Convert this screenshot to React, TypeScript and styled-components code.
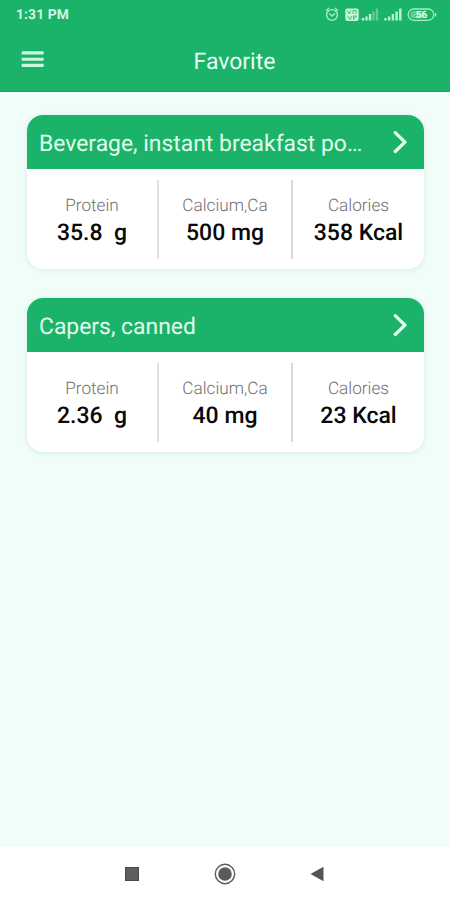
import React from "react";
import styled, { createGlobalStyle } from "styled-components";

const GREEN = "#1ab369";

const Global = createGlobalStyle`
  * { box-sizing: border-box; }
  html, body { margin: 0; padding: 0; }
  body {
    font-family: Roboto, "Liberation Sans", sans-serif;
    text-rendering: geometricPrecision;
    background: #f0fdf8;
  }
  svg { display: block; }
`;

const Screen = styled.div`
  width: 450px;
  height: 900px;
  display: flex;
  flex-direction: column;
  background: #f0fdf8;
  overflow: hidden;
`;

const Header = styled.header`
  height: 92px;
  flex: none;
  background: ${GREEN};
  border-bottom: 1px solid #18a661;
  color: #e6fff2;
`;

const StatusBar = styled.div`
  height: 30px;
  display: flex;
  justify-content: space-between;
  padding: 0 13px 0 16px;
`;

const Clock = styled.span`
  font-size: 13.8px;
  font-weight: 700;
  line-height: 31px;
  letter-spacing: 0.15px;
  color: #d5f8e4;
`;

const TitleBar = styled.div`
  height: 61px;
  display: grid;
  grid-template-columns: 86px 1fr 67px;
  align-items: start;
`;

const MenuButton = styled.button`
  border: 0;
  padding: 20px 0 0 21px;
  background: none;
  text-align: left;
`;

const Title = styled.h1`
  margin: 0;
  font-size: 23px;
  font-weight: 400;
  line-height: 60px;
  padding-top: 2px;
  text-align: center;
`;

const List = styled.main`
  flex: 1;
  display: flex;
  flex-direction: column;
  gap: 29px;
  padding: 23px 26px 0 27px;
`;

const Card = styled.article`
  height: 154px;
  border-radius: 16px;
  overflow: hidden;
  background: #fff;
  box-shadow: 0 1px 5px rgba(60, 150, 120, 0.16);
`;

const CardHeader = styled.div`
  height: 54px;
  display: flex;
  align-items: center;
  justify-content: space-between;
  padding: 0 14px 0 12px;
  background: ${GREEN};
  color: #e0fcec;
`;

const FoodName = styled.h2`
  margin: 0;
  width: 330px;
  font-size: 22.9px;
  font-weight: 400;
  line-height: 54px;
  padding-top: 4px;
  white-space: nowrap;
`;

const Nutrients = styled.div`
  height: 100px;
  display: grid;
  grid-template-columns: 132px 134px 1fr;
  padding-top: 11px;
`;

const Nutrient = styled.div<{ $divider?: string }>`
  height: 79px;
  border-right: ${(p) => (p.$divider ? `2px solid ${p.$divider}` : "0")};
  display: flex;
  flex-direction: column;
  align-items: center;
  padding-top: 15px;
  white-space: pre;
`;

const Label = styled.span`
  font-size: 17.2px;
  font-weight: 300;
  line-height: 22px;
  color: #707070;
`;

const Value = styled.strong`
  font-size: 23px;
  font-weight: 500;
  line-height: 30px;
  color: #080808;
  margin-top: 1px;
`;

const NavBar = styled.nav`
  height: 53px;
  flex: none;
  background: #fff;
`;

const NavIcons = styled.div`
  display: flex;
  align-items: center;
  justify-content: space-between;
  height: 53px;
  padding: 0 126px 0 125px;
`;

const foods = [
  { name: "Beverage, instant breakfast po…", values: ["35.8  g", "500 mg", "358 Kcal"] },
  { name: "Capers, canned", values: ["2.36  g", "40 mg", "23 Kcal"] },
];

const StatusIcons = () => (
  <svg width="114" height="30" viewBox="323 0 114 30" fill="none" stroke="#a8edca">
    <circle cx="332" cy="15" r="5.4" strokeWidth="1.4" />
    <path d="M326 11l3-3M338 11l-3-3M329.5 13.5l2.5 2.5 3-2.5" strokeWidth="1.4" />
    <rect x="345.3" y="8.5" width="13.4" height="12.5" rx="2" fill="#c8f5dc" stroke="none" />
    <path d="M347.5 10.5l1.7 3.5 1.7-3.5M353 14v-3.5h3V14M348 16l2 3.5 2-3.5M353.5 19.5V16h3l-3 3.5" stroke={GREEN} strokeWidth="0.8" />
    <g strokeWidth="2.4">
      <path d="M363 20.5v-2.5M366.5 20.5v-4M370 20.5v-6.5" stroke="#b9f2d4" />
      <path d="M373.5 20.5v-9M377 20.5v-12" stroke="#62cc97" />
      <path d="M385.5 20.5v-2.5M389.2 20.5v-4M392.9 20.5v-6.5M396.6 20.5v-9M400.3 20.5v-12" stroke="#b9f2d4" />
    </g>
    <rect x="408.2" y="9" width="25.6" height="11.3" rx="5.6" strokeWidth="1.3" />
    <rect x="410.3" y="11" width="15" height="7.3" rx="3.5" fill="#5fcf97" stroke="none" />
    <path d="M435.6 13v3.5" strokeWidth="1.3" />
    <text x="421.5" y="18.3" fill="#e2ffef" stroke="none" fontSize="10" fontWeight="700" textAnchor="middle">56</text>
  </svg>
);

const MenuIcon = () => (
  <svg width="24" height="18" viewBox="0 0 24 18" fill="#cbf7df">
    <rect x="0.7" y="1.3" width="22" height="3.2" rx="0.6" />
    <rect x="0.7" y="7.7" width="22" height="3" rx="0.6" />
    <rect x="0.7" y="13.7" width="22" height="3.2" rx="0.6" />
  </svg>
);

const Chevron = () => (
  <svg width="18" height="26" viewBox="0 0 18 26" fill="none" stroke="#e8fff3" strokeWidth="3.2" strokeLinecap="round" strokeLinejoin="round">
    <path d="M3.2 3.7l9.8 9.5-9.8 9.3" />
  </svg>
);

export default function App() {
  return (
    <Screen>
      <Global />
      <Header>
        <StatusBar>
          <Clock>1:31 PM</Clock>
          <StatusIcons />
        </StatusBar>
        <TitleBar>
          <MenuButton aria-label="Menu"><MenuIcon /></MenuButton>
          <Title>Favorite</Title>
        </TitleBar>
      </Header>
      <List>
        {foods.map((food) => (
          <Card key={food.name}>
            <CardHeader>
              <FoodName>{food.name}</FoodName>
              <Chevron />
            </CardHeader>
            <Nutrients>
              <Nutrient $divider="#e0e0e0">
                <Label>Protein</Label>
                <Value>{food.values[0]}</Value>
              </Nutrient>
              <Nutrient $divider="#dad7d9">
                <Label>Calcium,Ca</Label>
                <Value>{food.values[1]}</Value>
              </Nutrient>
              <Nutrient>
                <Label>Calories</Label>
                <Value>{food.values[2]}</Value>
              </Nutrient>
            </Nutrients>
          </Card>
        ))}
      </List>
      <NavBar>
        <NavIcons>
          <svg width="14" height="14"><rect x="0.5" y="0.5" width="13" height="13" fill="#5e5e5e" stroke="#484848" /></svg>
          <svg width="22" height="22" fill="none" stroke="#5b5b5b">
            <circle cx="11" cy="11" r="9.7" strokeWidth="1.4" />
            <circle cx="11" cy="11" r="6.8" fill="#5b5b5b" stroke="none" />
          </svg>
          <svg width="14" height="16"><path d="M0.5 8L13.5 0.7v14.6z" fill="#555" /></svg>
        </NavIcons>
      </NavBar>
    </Screen>
  );
}
